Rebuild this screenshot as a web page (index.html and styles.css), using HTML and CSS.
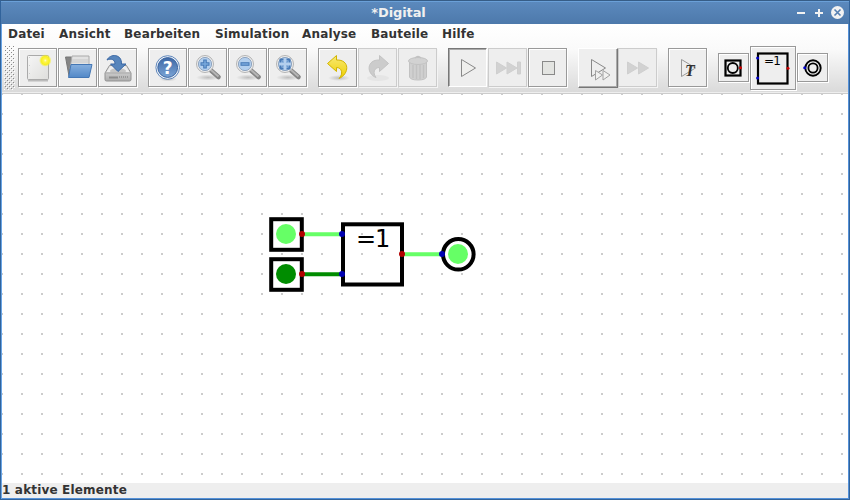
FILE: index.html
```
<!DOCTYPE html>
<html lang="de">
<head>
<meta charset="utf-8">
<title>Digital</title>
<link rel="stylesheet" href="styles.css">
</head>
<body>
<svg class="defs" width="0" height="0">
<defs>
<linearGradient id="page" x1="0" y1="0" x2="1" y2="1"><stop offset="0" stop-color="#f6f6f6"/><stop offset="1" stop-color="#dededc"/></linearGradient>
<radialGradient id="sun"><stop offset="0" stop-color="#fffbd0"/><stop offset=".25" stop-color="#fff64e"/><stop offset=".65" stop-color="#f8f020"/><stop offset="1" stop-color="#f8f020" stop-opacity="0"/></radialGradient>
<linearGradient id="blue" x1="0" y1="0" x2="0" y2="1"><stop offset="0" stop-color="#86afde"/><stop offset="1" stop-color="#5288c7"/></linearGradient>
<linearGradient id="help" x1="0" y1="0" x2="0" y2="1"><stop offset="0" stop-color="#3e68a5"/><stop offset="1" stop-color="#7ba4d5"/></linearGradient>
<linearGradient id="metal" x1="0" y1="0" x2="0" y2="1"><stop offset="0" stop-color="#e4e4e4"/><stop offset="1" stop-color="#adadad"/></linearGradient>
<linearGradient id="gold" x1="0" y1="0" x2="0" y2="1"><stop offset="0" stop-color="#f8e976"/><stop offset="1" stop-color="#eed000"/></linearGradient>
<radialGradient id="shade"><stop offset="0" stop-color="#777" stop-opacity=".4"/><stop offset="1" stop-color="#777" stop-opacity="0"/></radialGradient>
<g id="lens">
<ellipse cx="20" cy="29.500" rx="12" ry="3" fill="url(#shade)"/>
<path d="M22.500 22L30.500 29" stroke="#858585" stroke-width="4.600" stroke-linecap="round"/>
<path d="M22.500 21.500L30.500 28.500" stroke="#b5b5b5" stroke-width="2"/>
<circle cx="17" cy="16" r="8.500" fill="#eee" stroke="#b4b4b4"/>
<circle cx="17" cy="16" r="6.600" fill="#b3cfee" stroke="#8fa5c0"/>
</g>
</defs>
</svg>
<div class="window">
<header class="titlebar"><span class="title">*Digital</span>
<svg class="controls" width="50" height="24"><path d="M0 13h8M18 13h8M22 9v8" stroke="#f2f2f2" stroke-width="2"/><circle cx="40.500" cy="12.500" r="6.500" fill="#f2f2f2"/><path d="M37.500 9.500l6 6M43.500 9.500l-6 6" stroke="#557fb1" stroke-width="1.600"/></svg>
</header>
<div class="chrome">
<nav class="menu"><span class="m1">Datei</span><span class="m2">Ansicht</span><span class="m3">Bearbeiten</span><span class="m4">Simulation</span><span class="m5">Analyse</span><span class="m6">Bauteile</span><span>Hilfe</span></nav>
<div class="toolbar">
<svg class="grip" width="11" height="44"><defs><pattern id="gr" width="4" height="4" patternUnits="userSpaceOnUse"><path d="M1 0h1v1h-1zM3 2h1v1h-1z" fill="#888"/><path d="M2 1h1v1h-1zM0 3h1v1h-1z" fill="#fff"/></pattern></defs><rect width="11" height="44" fill="url(#gr)"/></svg>
<div class="group">
<button class="btn"><svg width="40" height="40"><path d="M10 32.500h20" stroke="#bbb" stroke-width="2"/><rect x="9.500" y="7.500" width="21" height="24" rx="1" fill="url(#page)" stroke="#aaa"/><path d="M11.500 9v21" stroke="#ccc" stroke-dasharray="1 7"/><circle cx="27.300" cy="12.500" r="6.300" fill="url(#sun)"/></svg></button>
<button class="btn"><svg width="40" height="40"><path d="M7.500 9h6l2 2h13v17H11z" fill="#858585" stroke="#777"/><path d="M14 8h17v13H12z" fill="#e2e2e2" stroke="#aaa"/><path d="M14 12h16M14 14h16" stroke="#c8c8c8"/><path d="M13 16.500h21l-3 13H10.500z" fill="url(#blue)" stroke="#4477b5"/></svg></button>
<button class="btn"><svg width="40" height="40"><path d="M11.500 17.500h17l4.500 7.500v6.500q0 1.500-1.500 1.500h-23q-1.500 0-1.500-1.500V25z" fill="url(#metal)" stroke="#929292"/><path d="M12 18.500h16l3.500 5.500h-23z" fill="#eee"/><ellipse cx="20" cy="23" rx="8" ry="3" fill="#c5c5c5"/><path d="M7 25h26" stroke="#aaa"/><path d="M11 29.500h9" stroke="#8c8c8c" stroke-width="2"/><path d="M21 29h9" stroke="#999" stroke-width="2" stroke-dasharray="1 1"/><path d="M9 12C12 5.500 24 5.500 23.500 16h4.500l-8 7.500-7.500-7.500h4.500C17 11.500 13 10 9 12z" fill="#5785bc" stroke="#3a67a4"/></svg></button>
</div>
<div class="group">
<button class="btn"><svg width="40" height="40"><ellipse cx="20" cy="31" rx="9" ry="2.500" fill="url(#shade)"/><circle cx="19.700" cy="19.500" r="11.800" fill="#f2f6fa" stroke="#5f86ba"/><circle cx="19.700" cy="19.500" r="9.900" fill="url(#help)" stroke="#3b65a1"/><text class="question" x="19.800" y="25.500" text-anchor="middle">?</text></svg></button>
<button class="btn"><svg width="40" height="40"><use href="#lens"/><path d="M12.500 16h9M17 11.500v9" stroke="#477ab7" stroke-width="3.600"/><path d="M13.500 16h7M17 12.500v7" stroke="#78a8dc" stroke-width="1.500"/></svg></button>
<button class="btn"><svg width="40" height="40"><use href="#lens"/><path d="M12.500 16h9" stroke="#477ab7" stroke-width="3.600"/><path d="M13.500 16h7" stroke="#78a8dc" stroke-width="1.500"/></svg></button>
<button class="btn"><svg width="40" height="40"><use href="#lens"/><path d="M12.500 14.500v-3h3M18.500 11.500h3v3M12.500 17.500v3h3M18.500 20.500h3v-3" fill="none" stroke="#477ab7" stroke-width="2"/><path d="M14 13l1.500 1.500M20 13l-1.500 1.500M14 19l1.500-1.500M20 19l-1.500-1.500" stroke="#6d9bd0" stroke-width="1.500"/></svg></button>
</div>
<div class="group">
<button class="btn"><svg width="40" height="40"><ellipse cx="21" cy="30" rx="11" ry="3" fill="url(#shade)"/><path d="M9.500 15.500L18.500 7.500V12C32 11.500 31.500 26 21 30.500C25.500 26 24 19.500 18.500 19.500V23.500z" fill="url(#gold)" stroke="#d2b400"/></svg></button>
<button class="btn off"><svg width="40" height="40"><ellipse cx="20" cy="30" rx="11" ry="3" fill="#e5e5e5"/><path d="M30.500 15.500L21.500 7.500V12C8 11.500 8.500 26 18 29.500C14.500 25 16 19.500 21.500 19.500V23.500z" fill="#ccc" stroke="#c3c3c3"/></svg></button>
<button class="btn off"><svg width="40" height="40"><path d="M11.500 14.500h17V29q-1 3-8.500 3t-8.500-3z" fill="#d0d0d0" stroke="#c2c2c2"/><path d="M15 17v13M18.500 17v14M22 17v14M25.500 17v13" stroke="#c2c2c2" stroke-width="1.500"/><ellipse cx="20" cy="13" rx="9.500" ry="3.500" fill="#d2d2d2" stroke="#c2c2c2"/><path d="M17 10q3-3 6 0" fill="none" stroke="#c2c2c2" stroke-width="1.500"/></svg></button>
</div>
<div class="group">
<button class="btn pressed"><svg width="40" height="40"><path d="M13.500 11.500L27.500 20L13.500 28.500z" fill="#efefed" stroke="#888"/></svg></button>
<button class="btn off"><svg width="40" height="40"><path d="M8.500 14l10 6-10 6zM19 14l10 6-10 6zM29.500 14h3v12h-3z" fill="#d2d2d2" stroke="#cfcfcf"/></svg></button>
<button class="btn"><svg width="40" height="40"><rect x="14.500" y="13.500" width="12" height="13" fill="#e3e4e1" stroke="#898989"/></svg></button>
</div>
<div class="group">
<button class="btn raised"><svg width="40" height="40"><path d="M13.500 11.500L27.500 20L13.500 28.500z" fill="#eee" stroke="#888"/><path d="M17.500 22.500l7 4.500-7 5zM25 22.500l7 4.500-7 5z" fill="#f1f1f0" stroke="#a2a2a2"/></svg></button>
<button class="btn off"><svg width="40" height="40"><path d="M9.500 14l10 6-10 6zM20.500 14l10 6-10 6z" fill="#d2d2d2" stroke="#cfcfcf"/></svg></button>
</div>
<div class="group">
<button class="btn"><svg width="40" height="40"><path d="M13.500 11.500L27.500 20L13.500 28.500z" fill="#eee" stroke="#999"/><text class="test" x="17" y="28">T</text></svg></button>
</div>
<div class="parts">
<button class="btn small"><svg width="31" height="30"><rect x="7.500" y="7.500" width="15" height="15" fill="none" stroke="#000" stroke-width="2.200"/><circle cx="14.800" cy="15" r="5" fill="none" stroke="#000" stroke-width="1.800"/><circle cx="22.500" cy="14.800" r="1.500" fill="#d00000"/></svg></button>
<button class="btn large"><svg width="46" height="44"><rect x="8" y="7.500" width="29.500" height="30" fill="none" stroke="#000" stroke-width="2.200"/><text class="gate" x="14" y="19">=1</text><g fill="#0000c8"><circle cx="7.600" cy="12" r="1.500"/><circle cx="7.600" cy="32" r="1.500"/></g><circle cx="38" cy="22.200" r="1.500" fill="#d00000"/></svg></button>
<button class="btn small"><svg width="31" height="30"><circle cx="16" cy="15" r="7.700" fill="none" stroke="#000" stroke-width="1.900"/><circle cx="16" cy="15" r="4.600" fill="none" stroke="#000" stroke-width="1.800"/><circle cx="7.700" cy="14.800" r="1.500" fill="#0000c8"/></svg></button>
</div>
</div>
</div>
<main class="canvas">
<svg width="846" height="389">
<defs><pattern id="dots" x="19" y="19" width="20" height="20" patternUnits="userSpaceOnUse"><rect width="2" height="2" fill="#ccc"/></pattern></defs>
<rect width="846" height="389" fill="url(#dots)"/>
<g transform="translate(-2 -94)">
<g fill="none" stroke-width="4"><path d="M302 234.300h40M402 254.300h40" stroke="#66ff66"/><path d="M302 274.300h40" stroke="#008c00"/>
<g stroke="#000"><rect x="271.200" y="219.200" width="30.600" height="30.600"/><rect x="271.200" y="259.200" width="30.600" height="30.600"/><rect x="343" y="224.300" width="59" height="60.200"/><circle cx="458.300" cy="254.300" r="15.300"/></g></g>
<g fill="#66ff66"><circle cx="286" cy="234" r="10"/><circle cx="458" cy="254" r="10"/></g>
<circle cx="286" cy="274" r="10" fill="#008c00"/>
<g fill="#b20000"><circle cx="302" cy="234" r="3"/><circle cx="302" cy="274" r="3"/><circle cx="402" cy="254" r="3"/></g>
<g fill="#0000b2"><circle cx="342" cy="234" r="3"/><circle cx="342" cy="274" r="3"/><circle cx="442" cy="254" r="3"/></g>
<text class="xor" x="356" y="247">=1</text>
</g>
</svg>
</main>
<footer class="status">1 aktive Elemente</footer>
</div>
</body>
</html>
```

FILE: styles.css
```
* { box-sizing: border-box; }
body { margin: 0; font: bold 12px "DejaVu Sans", sans-serif; letter-spacing: .17px; color: #333; overflow: hidden; }
.defs { position: absolute; }
.window { width: 850px; height: 500px; display: flex; flex-direction: column; border: 1px solid #31639b; border-top-color: #365d87; background: #fff; box-shadow: inset 1px 0 #6aa5e6, inset -1px 0 #5591d8, inset 0 -1px #5591d8; padding: 0 1px 1px; }
.titlebar { height: 23px; flex: none; display: flex; justify-content: flex-end; background: linear-gradient(#6aa0d8 0 1px, #5b89bd 1px, #4d79ab); color: #f0f0f0; margin: 0 -1px; padding: 0 2px 0 0; }
.title { flex: 1; text-align: center; line-height: 23px; font-size: 13px; letter-spacing: -.1px; padding-right: 1px; }
.controls { margin-top: -1px; }
.chrome { height: 70px; flex: none; background: linear-gradient(#fff, #fafafa 25px, #dadada 68px); border-bottom: 1px solid #ccc; box-shadow: inset 0 -1px #eee; }
.menu { height: 20px; display: flex; padding-left: 6px; line-height: 20px; white-space: nowrap; }
.m1 { width: 51px; }
.m2 { width: 65px; }
.m3 { width: 91px; }
.m4 { width: 87px; }
.m5 { width: 69px; }
.m6 { width: 71px; }
.toolbar { display: flex; padding: 2px 0 0 2px; height: 49px; }
.grip { margin-right: 3px; }
.group { display: flex; gap: 1px; margin: 2px 11px 0 0; }
.grip, .parts, .group { flex: none; }
.btn { width: 39px; height: 39px; flex: none; padding: 0; border: 1px solid #999; background: #eee; box-shadow: 1px 1px #fff, inset 1px 1px #fff; overflow: visible; letter-spacing: 0; }
.btn svg { display: block; margin: -1px; }
.off { border-color: #ccc; box-shadow: 1px 1px #f4f4f4; }
.pressed { border-color: #777 #fff #fff #777; box-shadow: inset 1px 1px #aaa; }
.raised { width: 40px; height: 40px; margin-right: -1px; border-color: #fff #777 #777 #fff; box-shadow: inset -1px -1px #aaa; }
.parts { display: flex; align-items: center; gap: 1px; height: 44px; }
.small { width: 31px; height: 29px; margin-top: -1px; }
.large { width: 46px; height: 44px; }
.canvas { height: 389px; flex: none; }
.canvas svg { display: block; }
.status { flex: 1; background: #eee; line-height: 15px; }
.question { font: bold 17px "DejaVu Sans", sans-serif; fill: #fff; }
.test { font: italic bold 16px "Liberation Serif", serif; fill: #333; }
.gate { font: 12px "DejaVu Sans", sans-serif; letter-spacing: -.8px; }
.xor { font: 24px "DejaVu Sans", sans-serif; letter-spacing: -1.2px; }
```
